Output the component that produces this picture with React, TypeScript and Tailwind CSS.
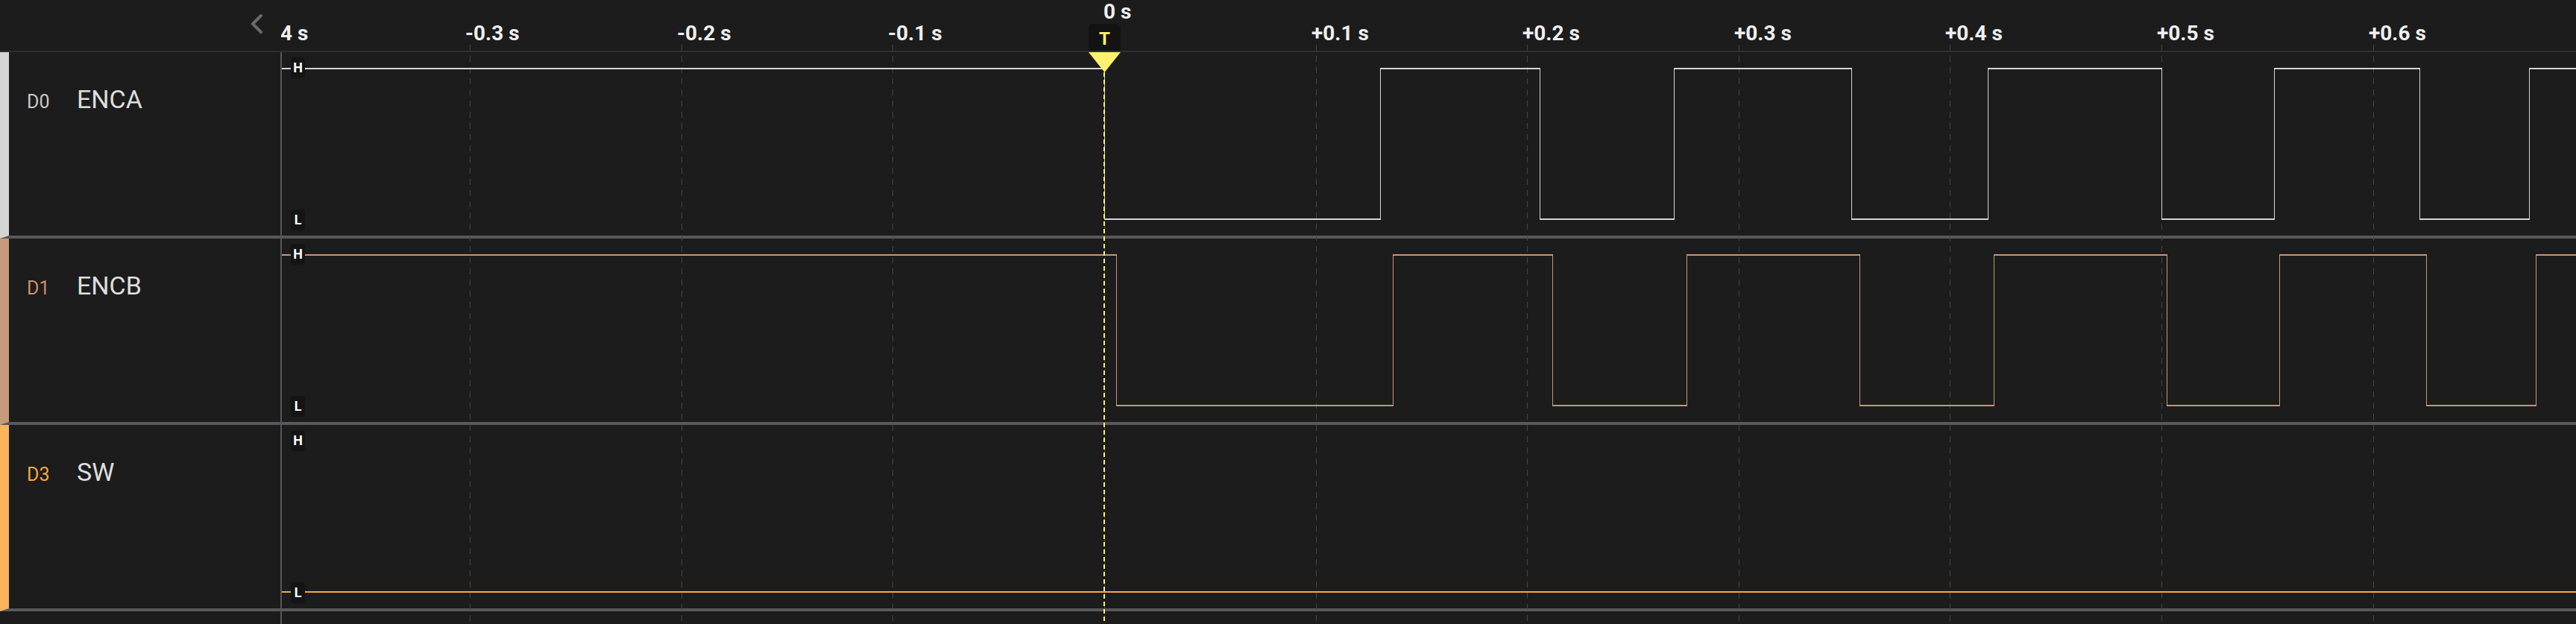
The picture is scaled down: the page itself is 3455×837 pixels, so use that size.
import React from 'react';

// trace area starts right of the divider
const X0 = 378;
const W = 3455;
const HI = 22;
const LO = 224;

const ticks = [-3, -2, -1, 0, 1, 2, 3, 4, 5, 6].map((k) => ({
  k,
  x: Math.round(1481 + 283.6 * k),
  label: k === 0 ? '' : `${k < 0 ? '-' : '+'}0.${Math.abs(k)} s`,
}));

type Row = {
  id: string;
  name: string;
  rowCls: string;
  idCls: string;
  stroke: string;
  edges: number[];
  startHigh: boolean;
};

const rows: Row[] = [
  {
    id: 'D0',
    name: 'ENCA',
    rowCls: 'border-l-[#d4d4d4]',
    idCls: 'text-[#c9c9c9]',
    stroke: '#d4d4d4',
    edges: [1481, 1851, 2065, 2245, 2483, 2666, 2899, 3050, 3245, 3392],
    startHigh: true,
  },
  {
    id: 'D1',
    name: 'ENCB',
    rowCls: 'border-l-[#c69a7b]',
    idCls: 'text-[#c8916c]',
    stroke: '#c4967a',
    edges: [1497, 1868, 2082, 2262, 2494, 2674, 2906, 3057, 3254, 3401],
    startHigh: true,
  },
  {
    id: 'D3',
    name: 'SW',
    rowCls: 'border-l-[#f9b45c]',
    idCls: 'text-[#f5a640]',
    stroke: '#f5a94a',
    edges: [],
    startHigh: false,
  },
];

function Trace({ edges, startHigh, stroke }: { edges: number[]; startHigh: boolean; stroke: string }) {
  const xs = [X0, ...edges, W];
  const parts: React.ReactNode[] = [];
  for (let i = 0; i < xs.length - 1; i++) {
    const high = startHigh ? i % 2 === 0 : i % 2 === 1;
    parts.push(
      <rect key={'h' + i} x={xs[i] - X0} y={(high ? HI : LO) - 1} width={xs[i + 1] - xs[i] + 1} height={2} fill={stroke} />
    );
  }
  edges.forEach((e, i) => {
    parts.push(<rect key={'v' + i} x={e - X0} y={HI - 1} width={1.2} height={LO - HI + 2} fill={stroke} />);
  });
  return (
    <svg width={W - X0} height={246} className="absolute left-0 top-0" shapeRendering="crispEdges">
      {parts}
    </svg>
  );
}

function Badge({ text }: { text: string }) {
  return (
    <div className="w-[19px] h-[28px] rounded-[4px] bg-[#141414] flex items-center justify-center text-[18px] font-bold leading-none text-white">
      {text}
    </div>
  );
}

export default function App() {
  return (
    <div className="relative w-[3455px] h-[837px] overflow-hidden bg-[#1c1c1c] font-[Roboto,sans-serif]">
      {/* grid ticks, under the traces */}
      <svg className="absolute left-0 top-0 z-0" width={W} height={837}>
        {ticks.map((t) => (
          <line key={t.k} x1={t.x + 0.5} x2={t.x + 0.5} y1={60} y2={837} stroke="#454545" strokeWidth={1} strokeDasharray="8 7" />
        ))}
      </svg>

      {/* time axis */}
      <div className="flex h-[70px] border-b-2 border-[#2f2f31]">
        <div className="w-[377px] shrink-0 flex justify-end items-start pt-[18px] pr-[22px]">
          <svg width={22} height={28} viewBox="0 0 22 28">
            <polyline points="17,3 6,14 17,25" fill="none" stroke="#6a6a6a" strokeWidth={4} strokeLinecap="round" strokeLinejoin="round" />
          </svg>
        </div>
        <div className="relative flex-1 overflow-hidden text-[28px] font-bold leading-none text-[#efefef]">
          <span className="absolute left-[-1px] top-[31px] whitespace-nowrap">4 s</span>
          {ticks
            .filter((t) => t.k !== 0)
            .map((t) => (
              <span key={t.k} className="absolute top-[31px] whitespace-nowrap" style={{ left: t.x - 6 - 377 }}>
                {t.label}
              </span>
            ))}
          <div className="absolute top-[2px] flex flex-col items-start gap-[2px]" style={{ left: 1460 - 377 }}>
            <span className="pl-[20px] whitespace-nowrap">0 s</span>
            <div className="w-[43px] h-[40px] rounded-[6px] bg-[#131313] flex items-center justify-center text-[24px] text-[#fff06a]">
              T
            </div>
          </div>
        </div>
      </div>

      {/* channels */}
      {rows.map((r) => (
        <div key={r.id} className={`flex h-[250px] border-l-[12px] border-b-4 border-b-[#58585d] ${r.rowCls}`}>
          <div className="w-[366px] shrink-0 flex items-baseline pl-[24px] pt-[46px] leading-none">
            <span className={`w-[67px] text-[25px] ${r.idCls}`}>{r.id}</span>
            <span className="text-[34px] text-[#dedede]">{r.name}</span>
          </div>
          <div className="relative z-10 flex-1">
            <Trace edges={r.edges} startHigh={r.startHigh} stroke={r.stroke} />
            <div className="relative flex flex-col justify-between h-[232px] mt-[7px] pl-[12px]">
              <Badge text="H" />
              <Badge text="L" />
            </div>
          </div>
        </div>
      ))}

      {/* divider + trigger marker on top */}
      <svg className="absolute left-0 top-0 z-20 pointer-events-none" width={W} height={837}>
        <rect x={376} y={70} width={2} height={767} fill="#56565a" />
        <line x1={1481} x2={1481} y1={97} y2={837} stroke="#fff06e" strokeWidth={2} strokeDasharray="6 4" />
        <polygon points="1460,70 1503,70 1481.5,97" fill="#fff06e" />
      </svg>
    </div>
  );
}
